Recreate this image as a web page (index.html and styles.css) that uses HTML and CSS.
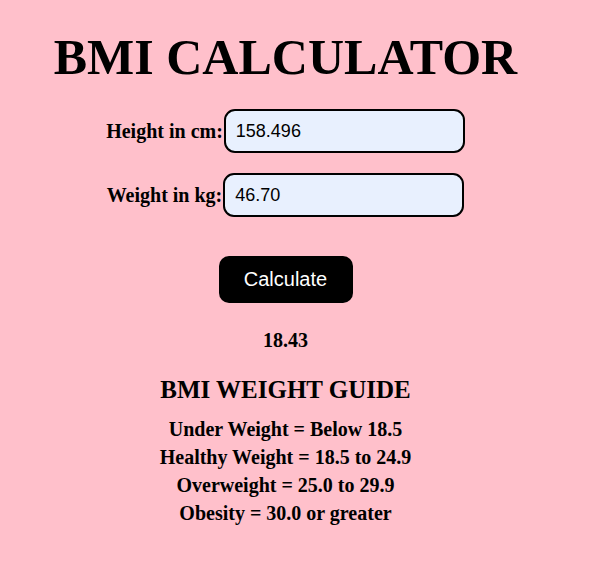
FILE: index.html
```html
<!DOCTYPE html>
<html>
<head>
<meta charset="utf-8">
<link rel="stylesheet" href="styles.css">
</head>
<body>
<div class="app">
  <h1 class="title">BMI CALCULATOR</h1>
  <div class="field">
    <label class="label">Height in cm:</label>
    <input class="input" type="text" value="158.496">
  </div>
  <div class="field">
    <label class="label">Weight in kg:</label>
    <input class="input" type="text" value="46.70">
  </div>
  <button class="btn">Calculate</button>
  <div class="result">18.43</div>
  <h2 class="guide-title">BMI WEIGHT GUIDE</h2>
  <div class="guide">
    <p>Under Weight = Below 18.5</p>
    <p>Healthy Weight = 18.5 to 24.9</p>
    <p>Overweight = 25.0 to 29.9</p>
    <p>Obesity = 30.0 or greater</p>
  </div>
</div>
</body>
</html>
```
FILE: styles.css
```css
html, body {
  background: #ffc0cb;
}
body {
  margin: 8px;
  font-family: "Liberation Serif", "Times New Roman", serif;
  color: #000;
}
.app {
  width: 555px;
  display: flex;
  flex-direction: column;
  align-items: center;
}
.title {
  font-size: 50px;
  font-weight: bold;
  margin: 19px 0 22px;
  line-height: 60px;
}
.field {
  display: flex;
  align-items: center;
  margin-bottom: 20px;
}
.label {
  font-size: 20px;
  font-weight: bold;
}
.input {
  width: 241px;
  height: 44px;
  box-sizing: border-box;
  border: 2px solid #000;
  border-radius: 11px;
  background: #e8f0fe;
  font-family: "Liberation Sans", Arial, sans-serif;
  font-size: 18px;
  padding: 0 10px;
  margin: 0 0 0 1px;
  color: #000;
}
.btn {
  margin-top: 19px;
  width: 134px;
  height: 47px;
  border: none;
  border-radius: 10px;
  background: #000;
  color: #fff;
  font-family: "Liberation Sans", Arial, sans-serif;
  font-size: 20px;
}
.result {
  margin-top: 26px;
  font-size: 20px;
  font-weight: bold;
}
.guide-title {
  font-size: 25px;
  font-weight: bold;
  margin: 24px 0 11px;
}
.guide p {
  margin: 0;
  font-size: 20px;
  font-weight: bold;
  text-align: center;
  line-height: 28px;
}
```
